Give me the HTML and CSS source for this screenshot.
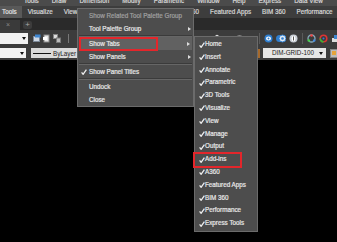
FILE: index.html
```html
<!DOCTYPE html>
<html>
<head>
<meta charset="utf-8">
<link rel="stylesheet" href="styles.css">
</head>
<body>
<div class="app">
  <div class="menubar">
    <span class="mb">Tools</span><span class="mb">Draw</span><span class="mb">Dimension</span><span class="mb">Modify</span><span class="mb">Parametric</span><span class="mb">Window</span><span class="mb">Help</span><span class="mb">Express</span><span class="mb">Data View</span>
  </div>
  <div class="tabs">
    <span class="tab first">Tools</span><span class="tab">Visualize</span><span class="tab">View</span><span class="tab">Manage</span><span class="tab">Output</span><span class="tab">Add-ins</span><span class="tab">A360</span><span class="tab">Featured Apps</span><span class="tab">BIM 360</span><span class="tab">Performance</span>
  </div>
  <div class="filetabs">
    <span class="ftab">×</span><span class="fplus">+</span>
  </div>
  <div class="tb tb1">
    <span class="combo c1"><span class="dd"></span></span>
    <span class="icons-left">
      <svg width="8" height="9" viewBox="0 0 8 9"><rect x="0.5" y="2.5" width="6" height="5" fill="#cfd8e4" stroke="#7d8a99"/><rect x="2" y="0.5" width="5.5" height="3" fill="#3f86d0"/></svg>
      <svg width="8" height="9" viewBox="0 0 8 9"><rect x="1" y="1" width="5" height="7" fill="#e8e8e8" stroke="#888"/><rect x="0" y="3" width="4" height="3" fill="#fff"/></svg>
      <svg width="8" height="9" viewBox="0 0 8 9"><rect x="0.5" y="0.5" width="4" height="4" fill="#ddd" stroke="#888"/><rect x="3.5" y="4" width="4" height="4.5" fill="#bbb" stroke="#777"/></svg>
    </span>
    <span class="vsep"></span>
    <span class="right-group r1">
      <svg width="8" height="8" viewBox="0 0 8 8"><rect x="0.5" y="2" width="7" height="5" fill="#8fb1d8"/></svg>
      <svg width="8" height="8" viewBox="0 0 8 8"><circle cx="4" cy="2.5" r="1.8" fill="#ddd"/><rect x="1.5" y="5" width="5" height="3" fill="#ccc"/></svg>
      <svg width="8" height="8" viewBox="0 0 8 8"><path d="M1 7 L4 2 L7 7 Z" fill="#9ab8dd"/></svg>
      <svg width="9" height="8" viewBox="0 0 9 8"><ellipse cx="4.5" cy="4" rx="4" ry="2" fill="none" stroke="#ddd"/></svg>
      <svg width="8" height="8" viewBox="0 0 8 8"><rect x="0.5" y="2" width="7" height="5" fill="#dfe6ee"/></svg>
      <span class="vsep2"></span>
      <svg width="9" height="9" viewBox="0 0 9 9"><circle cx="4.5" cy="4.5" r="4" fill="#2f7fd0"/><ellipse cx="4.5" cy="4.5" rx="2.5" ry="2" fill="#fff"/><circle cx="4.5" cy="4.5" r="1" fill="#2f7fd0"/></svg>
      <svg width="10" height="9" viewBox="0 0 10 9"><circle cx="3.5" cy="4.5" r="3.5" fill="#2f7fd0"/><circle cx="6.5" cy="4.5" r="3.5" fill="#dfe8f4" stroke="#2f7fd0"/><circle cx="6.5" cy="4.5" r="1.3" fill="#2f7fd0"/></svg>
      <svg width="9" height="9" viewBox="0 0 9 9"><circle cx="4.5" cy="4.5" r="4" fill="#c9ced6"/><ellipse cx="4.5" cy="4.5" rx="2" ry="2.7" fill="#fff"/><rect x="4" y="2.5" width="1" height="4" fill="#555"/></svg>
      <span class="vsep2"></span>
      <svg width="9" height="9" viewBox="0 0 9 9"><circle cx="4.5" cy="4.5" r="3.5" fill="none" stroke="#8ab" stroke-width="1.3"/><circle cx="4.5" cy="1.5" r="1.3" fill="#e44"/><circle cx="1.8" cy="6.5" r="1.3" fill="#4c4"/><circle cx="7.2" cy="6.5" r="1.3" fill="#48d"/></svg>
      <svg width="9" height="9" viewBox="0 0 9 9"><circle cx="4.5" cy="4.5" r="3.3" fill="none" stroke="#d33" stroke-width="1.6"/><path d="M1.2 4.5 A3.3 3.3 0 0 0 4.5 7.8" fill="none" stroke="#3b3" stroke-width="1.6"/><circle cx="4.5" cy="4.5" r="1" fill="#37d"/></svg>
      <svg width="9" height="9" viewBox="0 0 9 9"><rect x="1" y="4" width="6" height="4" fill="#ddd"/><rect x="3" y="1" width="5" height="4" fill="#3f86d0"/></svg>
    </span>
  </div>
  <div class="tb tb2">
    <span class="combo c2"><span class="dd"></span></span>
    <span class="bylayer"><span class="line"></span><span class="bltext">ByLayer</span></span>
    <span class="right-group r2">
      <span class="orange"></span>
      <span class="dimbox"><span class="dimtext">DIM-GRID-100</span><span class="dd"></span></span>
      <svg width="8" height="9" viewBox="0 0 8 9"><rect x="0.5" y="0.5" width="7" height="8" fill="#bbb" stroke="#888"/><rect x="2" y="2" width="4" height="4" fill="#e7a33b"/></svg>
    </span>
  </div>
  <div class="canvas"></div>

  <div class="menu main">
    <div class="mi dis">Show Related Tool Palette Group</div>
    <div class="mi">Tool Palette Group<span class="arrow"></span></div>
    <div class="sep"></div>
    <div class="mi hl">Show Tabs<span class="arrow"></span></div>
    <div class="mi">Show Panels<span class="arrow"></span></div>
    <div class="sep"></div>
    <div class="mi"><svg class="chk" width="6" height="6" viewBox="0 0 6 6"><path d="M0.6 3.4 L2.1 5.3 L5.4 0.6" fill="none" stroke="#eee" stroke-width="1.3"/></svg>Show Panel Titles</div>
    <div class="sep"></div>
    <div class="mi">Undock</div>
    <div class="mi">Close</div>
  </div>

  <div class="menu sub">
    <div class="si"><svg class="chk" width="6" height="6" viewBox="0 0 6 6"><path d="M0.6 3.4 L2.1 5.3 L5.4 0.6" fill="none" stroke="#eee" stroke-width="1.3"/></svg>Home</div>
    <div class="si"><svg class="chk" width="6" height="6" viewBox="0 0 6 6"><path d="M0.6 3.4 L2.1 5.3 L5.4 0.6" fill="none" stroke="#eee" stroke-width="1.3"/></svg>Insert</div>
    <div class="si"><svg class="chk" width="6" height="6" viewBox="0 0 6 6"><path d="M0.6 3.4 L2.1 5.3 L5.4 0.6" fill="none" stroke="#eee" stroke-width="1.3"/></svg>Annotate</div>
    <div class="si"><svg class="chk" width="6" height="6" viewBox="0 0 6 6"><path d="M0.6 3.4 L2.1 5.3 L5.4 0.6" fill="none" stroke="#eee" stroke-width="1.3"/></svg>Parametric</div>
    <div class="si"><svg class="chk" width="6" height="6" viewBox="0 0 6 6"><path d="M0.6 3.4 L2.1 5.3 L5.4 0.6" fill="none" stroke="#eee" stroke-width="1.3"/></svg>3D Tools</div>
    <div class="si"><svg class="chk" width="6" height="6" viewBox="0 0 6 6"><path d="M0.6 3.4 L2.1 5.3 L5.4 0.6" fill="none" stroke="#eee" stroke-width="1.3"/></svg>Visualize</div>
    <div class="si"><svg class="chk" width="6" height="6" viewBox="0 0 6 6"><path d="M0.6 3.4 L2.1 5.3 L5.4 0.6" fill="none" stroke="#eee" stroke-width="1.3"/></svg>View</div>
    <div class="si"><svg class="chk" width="6" height="6" viewBox="0 0 6 6"><path d="M0.6 3.4 L2.1 5.3 L5.4 0.6" fill="none" stroke="#eee" stroke-width="1.3"/></svg>Manage</div>
    <div class="si"><svg class="chk" width="6" height="6" viewBox="0 0 6 6"><path d="M0.6 3.4 L2.1 5.3 L5.4 0.6" fill="none" stroke="#eee" stroke-width="1.3"/></svg>Output</div>
    <div class="si"><svg class="chk" width="6" height="6" viewBox="0 0 6 6"><path d="M0.6 3.4 L2.1 5.3 L5.4 0.6" fill="none" stroke="#eee" stroke-width="1.3"/></svg>Add-ins</div>
    <div class="si"><svg class="chk" width="6" height="6" viewBox="0 0 6 6"><path d="M0.6 3.4 L2.1 5.3 L5.4 0.6" fill="none" stroke="#eee" stroke-width="1.3"/></svg>A360</div>
    <div class="si"><svg class="chk" width="6" height="6" viewBox="0 0 6 6"><path d="M0.6 3.4 L2.1 5.3 L5.4 0.6" fill="none" stroke="#eee" stroke-width="1.3"/></svg>Featured Apps</div>
    <div class="si"><svg class="chk" width="6" height="6" viewBox="0 0 6 6"><path d="M0.6 3.4 L2.1 5.3 L5.4 0.6" fill="none" stroke="#eee" stroke-width="1.3"/></svg>BIM 360</div>
    <div class="si"><svg class="chk" width="6" height="6" viewBox="0 0 6 6"><path d="M0.6 3.4 L2.1 5.3 L5.4 0.6" fill="none" stroke="#eee" stroke-width="1.3"/></svg>Performance</div>
    <div class="si"><svg class="chk" width="6" height="6" viewBox="0 0 6 6"><path d="M0.6 3.4 L2.1 5.3 L5.4 0.6" fill="none" stroke="#eee" stroke-width="1.3"/></svg>Express Tools</div>
  </div>

  <div class="redbox rb1"></div>
  <div class="redbox rb2"></div>
</div>
</body>
</html>
```
FILE: styles.css
```css
* { box-sizing: border-box; margin: 0; padding: 0; }
html, body { width: 337px; height: 242px; overflow: hidden; background: #000; }
body {
  font-family: "Liberation Sans", Arial, sans-serif;
  font-size: 6.3px;
  color: #dcdcdc;
}
.app {
  position: relative;
  width: 337px;
  height: 242px;
  display: flex;
  flex-direction: column;
}
.menubar {
  height: 6px;
  flex: none;
  background: #4b4b4b;
  overflow: hidden;
  display: flex;
  padding-left: 24px;
  gap: 13px;
}
.mb { line-height: 8px; margin-top: -3px; white-space: nowrap; color: #d8d8d8; -webkit-text-stroke: 0.2px #d8d8d8; }

.tabs {
  height: 12px;
  flex: none;
  background: #3d3d3d;
  display: flex;
  overflow: hidden;
}
.tab { padding: 0 5.5px; line-height: 12px; white-space: nowrap; color: #d6d6d6; -webkit-text-stroke: 0.2px #d6d6d6; }
.tab.first { padding-left: 2px; background: #595959; color: #ececec; }

.filetabs {
  height: 12px;
  flex: none;
  background: #2a2a2a;
  display: flex;
  align-items: flex-end;
  gap: 3px;
}
.ftab {
  width: 20px;
  height: 10px;
  background: #3a3a3a;
  color: #888;
  font-size: 7px;
  line-height: 10px;
  padding-left: 6px;
}
.fplus {
  width: 9px;
  height: 8px;
  margin-bottom: 1px;
  background: #3c3c3c;
  border-radius: 2px;
  color: #aaa;
  font-size: 8px;
  line-height: 8px;
  text-align: center;
}

.tb {
  flex: none;
  display: flex;
  align-items: center;
  background: #3c3c3c;
}
.tb1 { height: 16px; }
.tb2 { height: 14px; }
.combo {
  position: relative;
  background: #f2f2f2;
  flex: none;
}
.c1 { width: 28px; height: 11px; }
.c2 { width: 26px; height: 10px; }
.dd {
  position: absolute;
  right: 2px;
  top: 50%;
  margin-top: -1px;
  width: 0;
  height: 0;
  border-left: 2px solid transparent;
  border-right: 2px solid transparent;
  border-top: 3px solid #111;
}
.icons-left {
  display: flex;
  gap: 2px;
  margin-left: 5px;
  align-items: center;
}
.vsep { width: 1px; height: 9px; background: #777; margin-left: 7px; }
.right-group {
  margin-left: auto;
  display: flex;
  align-items: center;
  flex: none;
}
.r1 { gap: 3px; margin-right: -3px; }
.vsep2 { width: 1px; height: 11px; background: #5a5a5a; margin: 0 1px; }

.bylayer {
  display: flex;
  align-items: center;
  margin-left: 5px;
  width: 60px;
  height: 10px;
  background: #dadada;
  flex: none;
}
.line { width: 18px; height: 1px; background: #111; margin-left: 2px; }
.bltext { color: #222; margin-left: 2px; }
.r2 { gap: 2px; margin-right: -1px; }
.orange { width: 2px; height: 9px; background: #a76a2c; margin-right: 1px; }
.dimbox {
  position: relative;
  width: 63px;
  height: 10px;
  background: #e6e6e6;
  color: #222;
  line-height: 10px;
  padding-left: 9px;
  margin-right: 2px;
}
.dimbox .dd { right: 3px; }
.canvas { flex: 1; background: #000; }

.menu {
  position: absolute;
  background: #4d4d4d;
  border: 1px solid #6b6b6b;
  color: #e8e8e8;
  -webkit-text-stroke: 0.2px #e8e8e8;
}
.main { left: 77px; top: 8px; width: 117px; }
.mi {
  position: relative;
  height: 13px;
  line-height: 13px;
  padding-left: 11px;
  white-space: nowrap;
}
.mi.dis { color: #a0a0a0; -webkit-text-stroke: 0.2px #a0a0a0; }
.mi.hl { background: #616161; margin: 0 1px; padding-left: 10px; }
.sep {
  height: 2px;
  border-top: 1px solid #3b3b3b;
  border-bottom: 1px solid #666;
  margin: 0 1px;
}
.arrow {
  position: absolute;
  right: 2px;
  top: 5px;
  width: 0;
  height: 0;
  border-top: 2px solid transparent;
  border-bottom: 2px solid transparent;
  border-left: 3px solid #ddd;
}
.chk { position: absolute; left: 3px; top: 3.5px; }
.sub { left: 194px; top: 36px; width: 64px; padding: 1px 0; }
.si {
  position: relative;
  height: 12.8px;
  line-height: 12.8px;
  padding-left: 10px;
  white-space: nowrap;
}
.si .chk { left: 4px; }

.redbox {
  position: absolute;
  border: 2px solid #e3262b;
}
.rb1 { left: 79px; top: 37px; width: 79px; height: 14px; }
.rb2 { left: 193px; top: 152px; width: 49px; height: 16px; }
```
